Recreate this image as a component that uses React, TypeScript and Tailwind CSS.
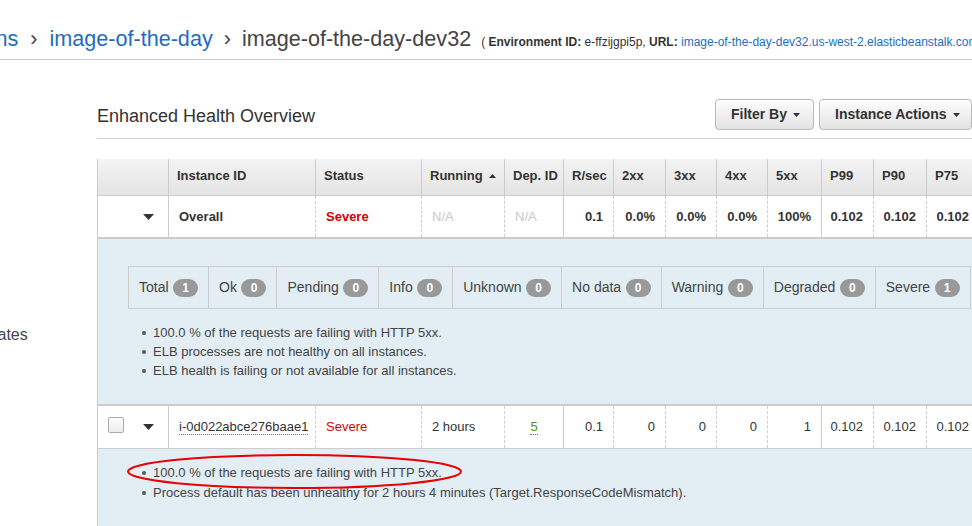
import React from 'react';

const COLS =
  'grid grid-cols-[70px_147px_106px_83px_59px_50px_52px_51px_51px_54px_52px_53px_53px_53px_53px]';

const HEADERS = ['', 'Instance ID', 'Status', 'Running', 'Dep. ID', 'R/sec', '2xx', '3xx', '4xx', '5xx', 'P99', 'P90', 'P75', 'P50', 'P10'];

// body rows: solid dividers only before Instance ID, R/sec and P99
const SOLID = [1, 5, 10];

const STATUS_COUNTS: [string, number][] = [
  ['Total', 1],
  ['Ok', 0],
  ['Pending', 0],
  ['Info', 0],
  ['Unknown', 0],
  ['No data', 0],
  ['Warning', 0],
  ['Degraded', 0],
  ['Severe', 1],
];

type Cell = { text: string; align?: 'left' | 'right' | 'center'; className?: string; dotted?: boolean };

const OVERALL: Cell[] = [
  { text: 'Overall', className: 'font-bold' },
  { text: 'Severe', className: 'font-bold text-[#d40000]' },
  { text: 'N/A', className: 'text-[#c8c8c8]' },
  { text: 'N/A', className: 'text-[#c8c8c8]' },
  { text: '0.1', align: 'right', className: 'font-bold' },
  { text: '0.0%', align: 'right', className: 'font-bold' },
  { text: '0.0%', align: 'right', className: 'font-bold' },
  { text: '0.0%', align: 'right', className: 'font-bold' },
  { text: '100%', align: 'right', className: 'font-bold' },
  { text: '0.102', align: 'right', className: 'font-bold' },
  { text: '0.102', align: 'right', className: 'font-bold' },
  { text: '0.102', align: 'right', className: 'font-bold' },
  { text: '0.102', align: 'right', className: 'font-bold' },
  { text: '0.102', align: 'right', className: 'font-bold' },
];

const INSTANCE: Cell[] = [
  { text: 'i-0d022abce276baae1', dotted: true },
  { text: 'Severe', className: 'text-[#d40000]' },
  { text: '2 hours' },
  { text: '5', align: 'center', className: 'text-[#4f8f12]', dotted: true },
  { text: '0.1', align: 'right' },
  { text: '0', align: 'right' },
  { text: '0', align: 'right' },
  { text: '0', align: 'right' },
  { text: '1', align: 'right' },
  { text: '0.102', align: 'right' },
  { text: '0.102', align: 'right' },
  { text: '0.102', align: 'right' },
  { text: '0.102', align: 'right' },
  { text: '0.102', align: 'right' },
];

const NAV = ['Dashboard', 'Configuration', 'Logs', 'Health', 'Monitoring', 'Alarms', 'Managed Updates', 'Events', 'Tags'];

function Caret() {
  return (
    <svg width="11" height="6" viewBox="0 0 11 6">
      <path d="M0 0h11L5.5 6z" fill="#333" />
    </svg>
  );
}

function SmallCaret({ up = false }: { up?: boolean }) {
  return (
    <svg width="7" height="4" viewBox="0 0 7 4">
      <path d={up ? 'M0 4h7L3.5 0z' : 'M0 0h7L3.5 4z'} fill="#333" />
    </svg>
  );
}

function BodyRow({ cells, first, className }: { cells: Cell[]; first: React.ReactNode; className: string }) {
  return (
    <div className={`${COLS} ${className} bg-white text-[13px] text-[#333]`}>
      <div className="flex items-center">{first}</div>
      {cells.map((c, i) => {
        const idx = i + 1;
        const edge = SOLID.includes(idx)
          ? 'border-l border-[#ccc]'
          : 'border-l border-dashed border-[#ccc]';
        const align =
          c.align === 'right' ? 'justify-end pr-2.5' : c.align === 'center' ? 'justify-center' : 'justify-start pl-2.5';
        return (
          <div key={idx} className={`flex items-center whitespace-nowrap ${edge} ${align}`}>
            {c.dotted ? (
              <span className={`inline-block leading-[15px] border-b border-dotted border-[#777] ${c.className ?? ''}`}>
                {c.text}
              </span>
            ) : (
              <span className={c.className}>{c.text}</span>
            )}
          </div>
        );
      })}
    </div>
  );
}

function Bullets({ items, className }: { items: string[]; className: string }) {
  return (
    <ul className={`text-[13px] text-[#444] ${className}`}>
      {items.map((t) => (
        <li key={t} className="flex items-center whitespace-nowrap">
          <span className="ml-[14px] mr-[7px] w-1 h-1 rounded-full bg-[#555]" />
          {t}
        </li>
      ))}
    </ul>
  );
}

export default function App() {
  return (
    <div className="relative w-[972px] h-[526px] overflow-hidden bg-white font-['Liberation_Sans',Arial,sans-serif] text-[#333]">
      {/* Breadcrumb header */}
      <div className="h-[60px] border-b border-[#ccc] pt-[26px]">
        <div className="flex items-baseline whitespace-nowrap ml-[-127px] text-[21.6px] leading-[25px] text-[#444]">
          <a className="text-[#1f6cbf]">All Applications</a>
          <span className="mx-3">›</span>
          <a className="text-[#1f6cbf]">image-of-the-day</a>
          <span className="mx-[11px]">›</span>
          <span>image-of-the-day-dev32</span>
          <span className="ml-[10px] text-[12px] leading-[14px] text-[#333]">
            ( <b>Environment ID:</b> e-ffzijgpi5p, <b>URL:</b>{' '}
            <a className="text-[#1f6cbf]">image-of-the-day-dev32.us-west-2.elasticbeanstalk.com</a> )
          </span>
        </div>
      </div>

      <div className="flex">
        {/* Left navigation, mostly scrolled out of view */}
        <aside className="w-[97px] shrink-0 overflow-hidden pt-[15px]">
          <ul className="ml-[-103px] text-[16px] text-[#444]">
            {NAV.map((n) => (
              <li key={n} className="h-10 flex items-center whitespace-nowrap">
                {n}
              </li>
            ))}
          </ul>
        </aside>

        {/* Main */}
        <main className="w-[875px] shrink-0 pt-[39px]">
          <div className="flex items-end justify-between border-b border-[#d2d2d2] pb-2">
            <h2 className="text-[18px] leading-[21px] pb-[3px] text-[#333]">Enhanced Health Overview</h2>
            <div className="flex gap-[5px]">
              <button className="w-[99px] h-[31px] flex items-center gap-[6px] pl-[15px] rounded-[4px] border border-[#b9b9b9] bg-linear-to-b from-[#fdfdfd] to-[#e3e3e3] text-[14px] font-bold text-[#333]">
                Filter By
                <SmallCaret />
              </button>
              <button className="w-[153px] h-[31px] flex items-center gap-[6px] pl-[15px] rounded-[4px] border border-[#b9b9b9] bg-linear-to-b from-[#fdfdfd] to-[#e3e3e3] text-[14px] font-bold text-[#333] whitespace-nowrap">
                Instance Actions
                <SmallCaret />
              </button>
            </div>
          </div>

          {/* Health table */}
          <div className="mt-5 w-[935px] border-l border-[#ccc]">
            <div className={`${COLS} h-[37px] border-b border-[#ccc] bg-linear-to-b from-[#f4f4f4] to-[#e4e4e4]`}>
              {HEADERS.map((h, i) => (
                <div
                  key={i}
                  className={`flex items-center gap-[6px] pl-2 pb-[3px] whitespace-nowrap text-[13px] font-bold text-[#333] ${
                    i > 0 ? 'border-l border-[#ccc]' : ''
                  }`}
                >
                  {h}
                  {h === 'Running' && <SmallCaret up />}
                </div>
              ))}
            </div>

            <BodyRow
              cells={OVERALL}
              className="h-[43px] border-b-2 border-[#ccc]"
              first={
                <span className="ml-auto mr-[14px] flex">
                  <Caret />
                </span>
              }
            />

            <div className="bg-[#e2edf4] pl-[30px] pt-[27px] pb-6">
              <div className="inline-flex h-[43px] border border-[#ccc]">
                {STATUS_COUNTS.map(([label, n], i) => (
                  <div
                    key={label}
                    className={`flex items-center px-2.5 whitespace-nowrap text-[14px] text-[#444] ${
                      i > 0 ? 'border-l border-[#ccc]' : ''
                    }`}
                  >
                    {label}
                    <span className="ml-[4.5px] inline-flex items-center justify-center w-[25px] h-[18px] rounded-full bg-[#999] text-white text-[12px] font-bold">
                      {n}
                    </span>
                  </div>
                ))}
              </div>
              <Bullets
                className="mt-[14px] leading-[19px]"
                items={[
                  '100.0 % of the requests are failing with HTTP 5xx.',
                  'ELB processes are not healthy on all instances.',
                  'ELB health is failing or not available for all instances.',
                ]}
              />
            </div>

            <BodyRow
              cells={INSTANCE}
              className="h-[45px] border-t-2 border-b border-[#ccc]"
              first={
                <>
                  <span className="ml-[10px] mb-[5px] w-4 h-4 rounded-[2px] border border-[#aaa] bg-linear-to-b from-[#fcfcfc] to-[#ededed]" />
                  <span className="ml-auto mr-[14px] flex">
                    <Caret />
                  </span>
                </>
              }
            />

            <div className="bg-[#e2edf4] pl-[30px] pt-[14px] h-[100px]">
              <Bullets
                className="leading-[20px]"
                items={[
                  '100.0 % of the requests are failing with HTTP 5xx.',
                  'Process default has been unhealthy for 2 hours 4 minutes (Target.ResponseCodeMismatch).',
                ]}
              />
            </div>
          </div>
        </main>
      </div>

      {/* annotation circled on the screenshot */}
      <svg className="absolute left-0 top-0 pointer-events-none" width="972" height="526">
        <ellipse cx="294.5" cy="471.5" rx="166.5" ry="16.5" fill="none" stroke="#e60000" strokeWidth="2" />
      </svg>
    </div>
  );
}
